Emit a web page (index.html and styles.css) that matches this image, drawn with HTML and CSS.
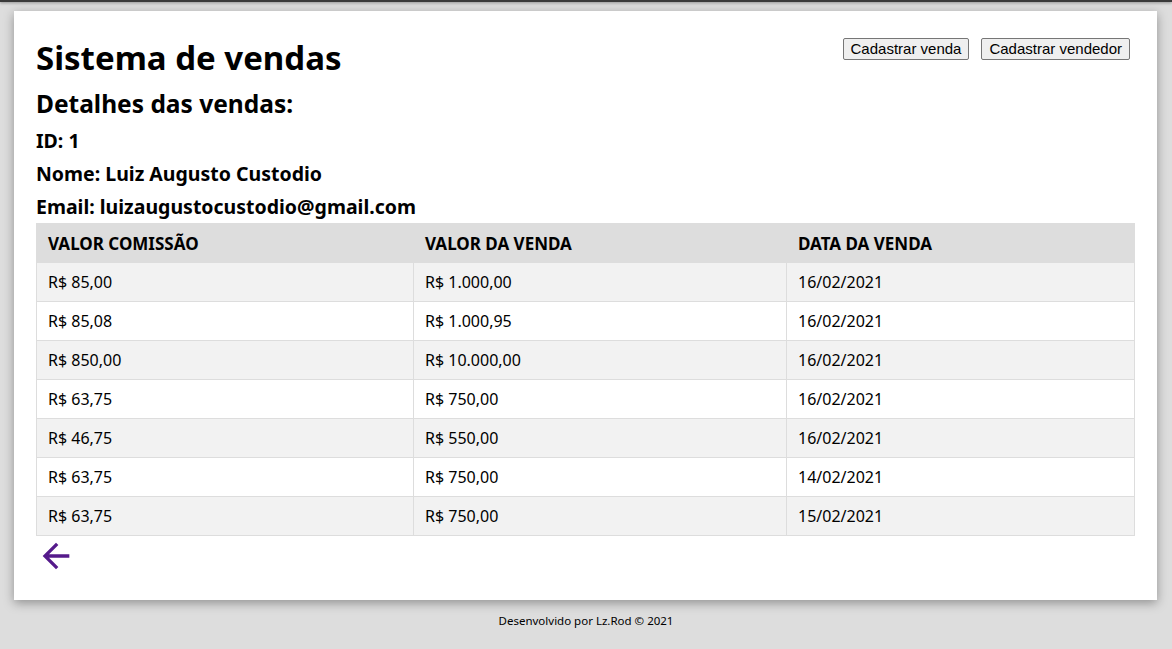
FILE: index.html
```html
<!DOCTYPE html>
<html lang="pt-BR">
<head>
<meta charset="utf-8">
<title>Sistema de vendas</title>
<link rel="stylesheet" href="styles.css">
</head>
<body>
<div class="topbar"></div>
<main class="card">
  <header class="head">
    <h1 class="title">Sistema de vendas</h1>
    <div class="actions">
      <button class="btn">Cadastrar venda</button>
      <button class="btn">Cadastrar vendedor</button>
    </div>
  </header>
  <h2 class="subtitle">Detalhes das vendas:</h2>
  <p class="info">ID: 1</p>
  <p class="info">Nome: Luiz Augusto Custodio</p>
  <p class="info">Email: luizaugustocustodio@gmail.com</p>
  <table class="sales">
    <colgroup><col class="c1"><col class="c2"><col class="c3"></colgroup>
    <thead>
      <tr><th>VALOR COMISSÃO</th><th>VALOR DA VENDA</th><th>DATA DA VENDA</th></tr>
    </thead>
    <tbody>
      <tr><td>R$ 85,00</td><td>R$ 1.000,00</td><td>16/02/2021</td></tr>
      <tr><td>R$ 85,08</td><td>R$ 1.000,95</td><td>16/02/2021</td></tr>
      <tr><td>R$ 850,00</td><td>R$ 10.000,00</td><td>16/02/2021</td></tr>
      <tr><td>R$ 63,75</td><td>R$ 750,00</td><td>16/02/2021</td></tr>
      <tr><td>R$ 46,75</td><td>R$ 550,00</td><td>16/02/2021</td></tr>
      <tr><td>R$ 63,75</td><td>R$ 750,00</td><td>14/02/2021</td></tr>
      <tr><td>R$ 63,75</td><td>R$ 750,00</td><td>15/02/2021</td></tr>
    </tbody>
  </table>
  <a class="back" href="#" aria-label="Voltar">
    <svg viewBox="0 0 24 24" width="40" height="40"><path fill="currentColor" d="M20 11H7.83l5.59-5.59L12 4l-8 8 8 8 1.41-1.41L7.83 13H20v-2z"/></svg>
  </a>
</main>
<footer class="foot">Desenvolvido por Lz.Rod © 2021</footer>
</body>
</html>
```
FILE: styles.css
```css
html, body { margin: 0; padding: 0; }
body {
  background: #dddddd;
  font-family: "Noto Sans", "Open Sans", sans-serif;
  color: #000;
  min-height: 649px;
}
.topbar {
  height: 2px;
  background: #3a3a3a;
  box-shadow: 0 1px 3px rgba(0,0,0,.4);
}
.card {
  background: #fff;
  margin: 9px 15px 0 14px;
  padding: 24px 22px 24px 22px;
  box-shadow: 0 3px 10px rgba(0,0,0,.35);
}
.head {
  display: flex;
  justify-content: space-between;
  align-items: flex-start;
}
.title {
  margin: 0;
  font-size: 33px;
  line-height: 46px;
  font-weight: 700;
}
.actions {
  display: flex;
  gap: 12px;
  padding-top: 3px;
  padding-right: 5px;
}
.btn {
  font-family: "Liberation Sans", Arial, sans-serif;
  font-size: 15px;
  padding: 0 7px;
  height: 22px;
  line-height: 18px;
  background: #efefef;
  border: 1px solid #767676;
  border-radius: 2px;
  color: #000;
}
.subtitle {
  margin: 4px 0 1px;
  font-size: 24.5px;
  line-height: 38px;
  font-weight: 700;
}
.info {
  margin: 0;
  font-size: 19.5px;
  line-height: 33px;
  font-weight: 700;
}
.sales {
  width: 100%;
  border-collapse: collapse;
  font-size: 16px;
}
.c1 { width: 377px; }
.c2 { width: 373px; }
.sales th, .sales td {
  border: 1px solid #dddddd;
  padding: 0 11px;
  height: 38px;
  text-align: left;
}
.sales th {
  background: #dddddd;
  font-size: 17px;
  font-weight: 700;
}
.sales tbody tr:nth-child(odd) { background: #f2f2f2; }
.back {
  display: block;
  width: 40px;
  height: 40px;
  color: #551a8b;
}
.back svg { display: block; }
.foot {
  text-align: center;
  font-size: 11.5px;
  line-height: 20px;
  padding-top: 11px;
  color: #000;
}
```
